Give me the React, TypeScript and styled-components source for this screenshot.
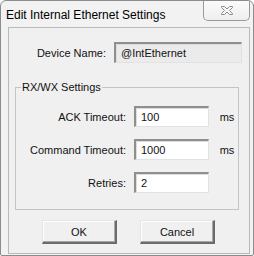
import styled, { createGlobalStyle } from 'styled-components';

const GlobalStyle = createGlobalStyle`
  html, body {
    margin: 0;
    padding: 0;
    background: #ffffff;
  }
  body {
    font-family: "Liberation Sans", Arial, sans-serif;
    font-size: 11px;
    color: #111;
  }
`;

const Window = styled.div`
  box-sizing: border-box;
  width: 254px;
  height: 256px;
  display: flex;
  flex-direction: column;
  background: #f2f2f2;
  border: 1px solid #8c8c8c;
  border-radius: 6px 6px 2px 2px;
  padding: 0 3px 1px 7px;
`;

const TitleBar = styled.div`
  height: 26px;
  display: flex;
  justify-content: space-between;
  align-items: flex-start;
  flex-shrink: 0;
`;

const Title = styled.span`
  font-size: 12px;
  line-height: 12px;
  margin-top: 8px;
  margin-left: -2px;
  color: #000;
`;

const CloseButton = styled.button`
  box-sizing: border-box;
  width: 47px;
  height: 20px;
  margin: 0;
  padding: 0;
  border: 1px solid #9a9a9a;
  border-top: none;
  border-radius: 0 0 5px 5px;
  background: linear-gradient(#fbfbfb, #eeeeee);
  display: flex;
  align-items: center;
  justify-content: center;
`;

const Client = styled.div`
  flex: 1;
  box-sizing: border-box;
  background: #f0f0f0;
  border: 1px solid #b9b9b9;
  padding: 14px 0 0 5px;
  display: flex;
  flex-direction: column;
`;

const FieldRow = styled.div<{ $labelWidth: number; $gap: number }>`
  display: grid;
  grid-template-columns: ${(p) => p.$labelWidth}px auto auto;
  column-gap: ${(p) => p.$gap}px;
  align-items: center;
  height: 21px;
`;

const Label = styled.span`
  text-align: right;
  white-space: nowrap;
`;

const TextBox = styled.div<{ $width: number; $readOnly?: boolean }>`
  box-sizing: border-box;
  width: ${(p) => p.$width}px;
  height: 21px;
  padding: 2px 0 0 5px;
  background: ${(p) => (p.$readOnly ? '#ebebeb' : '#ffffff')};
  border-style: solid;
  border-width: 2px 1px 1px 2px;
  border-color: #8f8f8f #e2e2e2 #e2e2e2 #8f8f8f;
  box-shadow: inset 1px 1px 0 #dcdcdc;
  line-height: 14px;
`;

const Unit = styled.span`
  margin-left: -1px;
`;

const GroupBox = styled.fieldset`
  box-sizing: border-box;
  width: 224px;
  height: 130px;
  margin: 17px 0 0 1px;
  padding: 12px 0 0 0;
  border: 1px solid #c4c4c4;
  border-radius: 0;
  display: flex;
  flex-direction: column;
  gap: 12px;
`;

const Legend = styled.legend`
  padding: 0 1px;
  margin-left: 5px;
  line-height: 14px;
`;

const ButtonRow = styled.div`
  display: flex;
  gap: 23px;
  margin: 10px 0 0 28px;
`;

const Button = styled.button`
  box-sizing: border-box;
  width: 75px;
  height: 24px;
  padding: 0;
  font: inherit;
  font-size: 11px;
  background: #f0f0f0;
  border-style: solid;
  border-width: 1px 2px 2px 1px;
  border-color: #e4e4e4 #6b6b6b #6b6b6b #e4e4e4;
  box-shadow: inset -1px -1px 0 #a8a8a8, inset 1px 1px 0 #ffffff;
  color: #111;
`;

function CloseIcon() {
  return (
    <svg width="14" height="11" viewBox="0 0 14 11">
      <path
        d="M1.5 1.5h3l2.5 2.5 2.5-2.5h3v1l-3 3 3 3v1h-3l-2.5-2.5-2.5 2.5h-3v-1l3-3-3-3z"
        fill="#f7f7f7"
        stroke="#8a8a8a"
        strokeWidth="1"
        strokeLinejoin="round"
      />
    </svg>
  );
}

export default function App() {
  return (
    <>
      <GlobalStyle />
      <Window>
        <TitleBar>
          <Title>Edit Internal Ethernet Settings</Title>
          <CloseButton aria-label="Close">
            <CloseIcon />
          </CloseButton>
        </TitleBar>
        <Client>
          <FieldRow $labelWidth={92} $gap={8}>
            <Label>Device Name:</Label>
            <TextBox $width={128} $readOnly>
              @IntEthernet
            </TextBox>
          </FieldRow>
          <GroupBox>
            <Legend>RX/WX Settings</Legend>
            <FieldRow $labelWidth={110} $gap={8}>
              <Label>ACK Timeout:</Label>
              <TextBox $width={75}>100</TextBox>
              <Unit>ms</Unit>
            </FieldRow>
            <FieldRow $labelWidth={110} $gap={8}>
              <Label>Command Timeout:</Label>
              <TextBox $width={75}>1000</TextBox>
              <Unit>ms</Unit>
            </FieldRow>
            <FieldRow $labelWidth={110} $gap={8}>
              <Label>Retries:</Label>
              <TextBox $width={75}>2</TextBox>
            </FieldRow>
          </GroupBox>
          <ButtonRow>
            <Button>OK</Button>
            <Button>Cancel</Button>
          </ButtonRow>
        </Client>
      </Window>
    </>
  );
}
